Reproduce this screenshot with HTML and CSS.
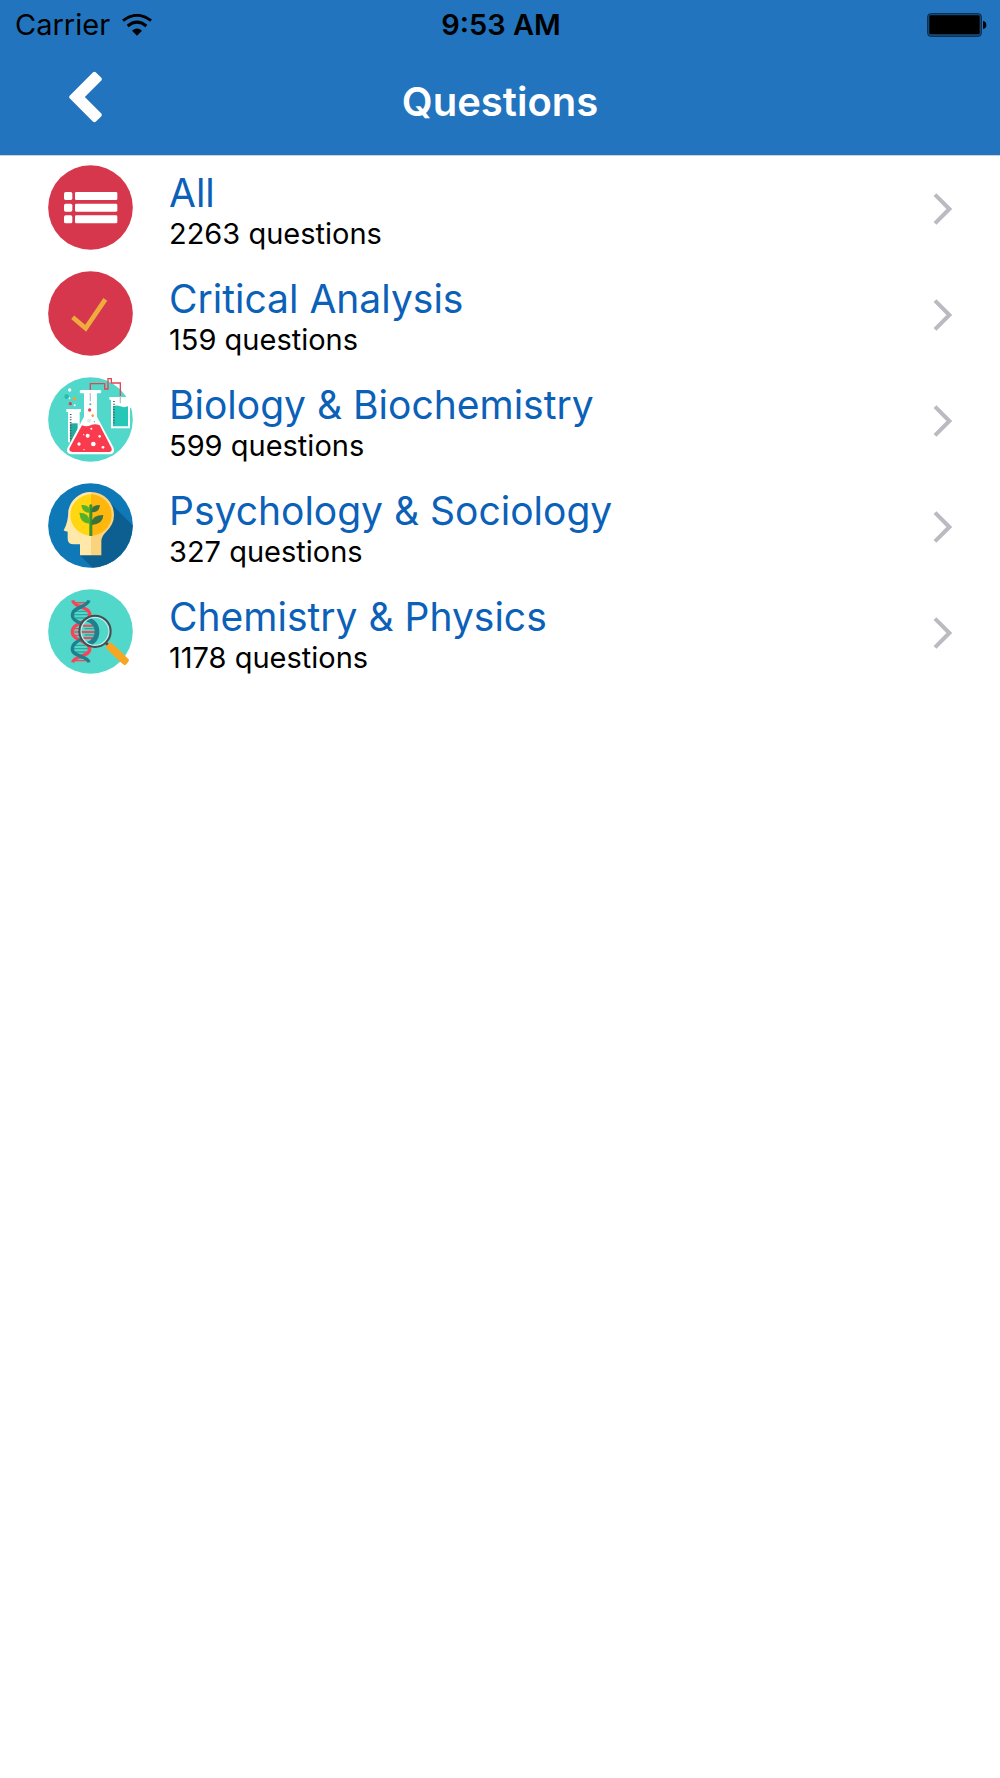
FILE: index.html
```html
<!DOCTYPE html>
<html lang="en">
<head>
    <meta charset="UTF-8">
    <title>Questions</title>
    <meta name="viewport" content="width=device-width, initial-scale=1.0">
    <link rel="stylesheet" href="styles.css">
</head>
<body>
    <!-- Header -->
    <header>
        <div class="status-bar">
            <div class="carrier">
                <span>Carrier</span>
                <svg class="wifi" viewBox="0 0 90 66" aria-hidden="true">
                    <path d="M3 20Q45-12 87 20" fill="none" stroke="#000" stroke-width="9"/>
                    <path d="M17 36Q45 13 73 36" fill="none" stroke="#000" stroke-width="9"/>
                    <path d="M30 50Q45 37 60 50L45 65Z"/>
                </svg>
            </div>
            <time>9:53 AM</time>
            <svg class="battery" viewBox="0 0 180 72" aria-hidden="true">
                <rect x="2" y="2" width="161" height="68" rx="9" fill="#174f80" stroke="#0b2740" stroke-width="3"/>
                <rect x="7" y="7" width="151" height="57" rx="4"/>
                <path d="M168 24Q178 26 178 36Q178 46 168 48Z"/>
            </svg>
        </div>
        <div class="nav-bar">
            <button type="button" class="back" aria-label="Back">
                <svg viewBox="0 0 100 154" aria-hidden="true">
                    <path d="M73 2Q77-1 81 2L98 19Q101 23 98 27L48 77L98 127Q101 131 98 135L81 152Q77 155 73 152L2 81Q-1 77 2 73Z" fill="#fff"/>
                </svg>
            </button>
            <h1>Questions</h1>
        </div>
    </header>

    <!-- Category list -->
    <main>
        <ul class="categories">
            <li>
                <a href="#">
                    <svg class="icon" viewBox="24 18 255 255" aria-hidden="true">
                        <circle cx="151.500" cy="145.500" r="127" fill="#d7374c"/>
                        <g fill="#fff">
                            <rect x="72" y="99" width="25" height="24" rx="5"/>
                            <rect x="105" y="99" width="127" height="24" rx="4"/>
                            <rect x="72" y="134" width="25" height="24" rx="5"/>
                            <rect x="105" y="134" width="127" height="24" rx="4"/>
                            <rect x="72" y="169" width="25" height="24" rx="5"/>
                            <rect x="105" y="169" width="127" height="24" rx="4"/>
                        </g>
                    </svg>
                    <span class="label">
                        <span class="name">All</span>
                        <span class="count">2263 questions</span>
                    </span>
                    <svg class="chevron" viewBox="0 0 57 96" aria-hidden="true"><path d="M6 5L49 48L6 91"/></svg>
                </a>
            </li>
            <li>
                <a href="#">
                    <svg class="icon" viewBox="24 25 255 255" aria-hidden="true">
                        <circle cx="151.500" cy="152.500" r="127" fill="#d7374c"/>
                        <path d="M98 164L137 197L196 110" fill="none" stroke="#efac3d" stroke-width="14"/>
                    </svg>
                    <span class="label">
                        <span class="name">Critical Analysis</span>
                        <span class="count">159 questions</span>
                    </span>
                    <svg class="chevron" viewBox="0 0 57 96" aria-hidden="true"><path d="M6 5L49 48L6 91"/></svg>
                </a>
            </li>
            <li>
                <a href="#">
                    <svg class="icon" viewBox="24 26 255 255" aria-hidden="true">
                        <circle cx="151.500" cy="153.500" r="127" fill="#52d8ca"/>
                        <!-- test tube -->
                        <path d="M79 122H123V131H119V222H84V131H79Z" fill="#fff"/>
                        <path d="M90 165H113V222H90Z" fill="#22ad9f"/>
                        <path d="M92 137V218" stroke="#4b5560" stroke-width="5" stroke-dasharray="3 5"/>
                        <!-- beaker -->
                        <path d="M208 86H273V118H270V180H213V94H208Z" fill="#fff"/>
                        <path d="M219 114Q230 109 241 114T264 114V174H219Z" fill="#25c8b6"/>
                        <path d="M222 98V171" stroke="#4b5560" stroke-width="5" stroke-dasharray="3 5"/>
                        <!-- pipe -->
                        <path d="M151 68V46H194V62H204V31H214V44H241V84" fill="none" stroke="#e54452" stroke-width="4"/>
                        <path d="M241 84V105" stroke="#b9c5ca" stroke-width="4"/>
                        <!-- flask -->
                        <path d="M123 65H180Q184 65 184 70T180 75H171V145L221 238Q226 257 208 258H95Q77 257 82 240L132 145V75H123Q119 75 119 70T123 65Z" fill="#fff"/>
                        <path d="M126 171Q139 177 152 171T179 171L214 238Q219 250 206 251H98Q85 250 89 239Z" fill="#fa3b4d"/>
                        <path d="M151 74V99" stroke="#b9c5ca" stroke-width="4"/>
                        <g fill="#fff">
                            <circle cx="143" cy="202" r="6"/>
                            <circle cx="160" cy="227" r="7"/>
                            <circle cx="117" cy="227" r="5"/>
                            <circle cx="179" cy="204" r="4"/>
                            <circle cx="189" cy="237" r="4"/>
                            <circle cx="154" cy="181" r="3"/>
                            <circle cx="131" cy="199" r="2"/>
                            <circle cx="132" cy="244" r="2"/>
                            <circle cx="89" cy="65" r="5"/>
                            <circle cx="88" cy="90" r="3"/>
                            <circle cx="104" cy="111" r="3"/>
                        </g>
                        <circle cx="80" cy="85" r="7" fill="#27bdac"/>
                        <circle cx="104" cy="91" r="5" fill="#f3a42b"/>
                        <circle cx="91" cy="106" r="5" fill="#d83f56"/>
                        <circle cx="149" cy="125" r="5" fill="#e54452"/>
                        <circle cx="151" cy="108" r="3" fill="#27bdac"/>
                        <circle cx="158" cy="142" r="4" fill="#f3a42b"/>
                        <circle cx="147" cy="157" r="6" fill="#e3e9eb"/>
                        <circle cx="163" cy="160" r="2" fill="#27bdac"/>
                    </svg>
                    <span class="label">
                        <span class="name">Biology &amp; Biochemistry</span>
                        <span class="count">599 questions</span>
                    </span>
                    <svg class="chevron" viewBox="0 0 57 96" aria-hidden="true"><path d="M6 5L49 48L6 91"/></svg>
                </a>
            </li>
            <li>
                <a href="#">
                    <svg class="icon" viewBox="24 21 255 255" aria-hidden="true">
                        <circle cx="151.500" cy="148.500" r="127" fill="#0f79b8"/>
                        <path d="M203 73L278 148A127 127 0 0 1 157 275L120 238V205L180 150Z" fill="#0d5f92"/>
                        <!-- head -->
                        <path d="M153 48A68 68 0 0 0 85 104Q85 138 71 163Q72 166 83 167V188Q83 205 101 205H120V238H153Z" fill="#ffe8a8"/>
                        <path d="M153 48A69 69 0 0 1 222 117Q222 145 198 168Q184 181 184 196V238H153Z" fill="#fbd37c"/>
                        <path d="M153 55A62 62 0 0 0 153 179Z" fill="#ffd60f"/>
                        <path d="M153 55A62 62 0 0 1 153 179Z" fill="#ffb70d"/>
                        <!-- plant -->
                        <path d="M148 180V87Q152 82 157 87V180Z" fill="#399130"/>
                        <path d="M150 110Q127 111 124 87Q146 86 150 102ZM150 143Q121 143 118 110Q145 110 150 134Z" fill="#55b12c"/>
                        <path d="M155 105Q154 87 180 87Q178 110 155 109ZM155 141Q156 117 190 117Q189 145 155 147Z" fill="#3a723e"/>
                    </svg>
                    <span class="label">
                        <span class="name">Psychology &amp; Sociology</span>
                        <span class="count">327 questions</span>
                    </span>
                    <svg class="chevron" viewBox="0 0 57 96" aria-hidden="true"><path d="M6 5L49 48L6 91"/></svg>
                </a>
            </li>
            <li>
                <a href="#">
                    <svg class="icon" viewBox="24 21 255 255" aria-hidden="true">
                        <circle cx="151.500" cy="148.500" r="127" fill="#52d8ca"/>
                        <!-- dna -->
                        <path d="M106 62H139M111 70H132M104 88H142M101 98H146M106 108H139M104 190H142M101 200H146M106 210H139" stroke="#2ba99f" stroke-width="4"/>
                        <path d="M104 62H141M112 70H134M103 140H135M103 150H135M103 160H135M110 228H134M104 236H141" stroke="#fa4357" stroke-width="4"/>
                        <g fill="none" stroke-width="10">
                            <path d="M98 55C104 80 149 72 149 98C149 124 97 120 97 149C97 178 149 174 149 202C149 224 103 220 98 241" stroke="#fa4357"/>
                            <path d="M147 55C141 76 97 76 97 98C97 116 113 118 127 126M127 170C112 178 97 184 97 202C97 224 142 220 147 241" stroke="#207e8d"/>
                        </g>
                        <!-- magnifier -->
                        <circle cx="165" cy="148" r="46" fill="#52d8ca"/>
                        <path d="M128 131H159M123 150H165M128 168H159" stroke="#fa4357" stroke-width="6"/>
                        <path d="M134 140H163M134 159H163" stroke="#2ba99f" stroke-width="4"/>
                        <path d="M139 111Q171 120 171 149T140 187" fill="none" stroke="#207e8d" stroke-width="14"/>
                        <circle cx="165" cy="148" r="42" fill="none" stroke="#b8eee9" stroke-width="4"/>
                        <circle cx="165" cy="148" r="47" fill="none" stroke="#494b50" stroke-width="6"/>
                        <path d="M198 183L207 192" stroke="#494b50" stroke-width="8"/>
                        <path d="M198 193L211 181Q214 181 267 233Q267 239 255 250Q251 251 198 198Z" fill="#f8a522"/>
                    </svg>
                    <span class="label">
                        <span class="name">Chemistry &amp; Physics</span>
                        <span class="count">1178 questions</span>
                    </span>
                    <svg class="chevron" viewBox="0 0 57 96" aria-hidden="true"><path d="M6 5L49 48L6 91"/></svg>
                </a>
            </li>
        </ul>
    </main>
</body>
</html>
```
FILE: styles.css
```css
* {
    box-sizing: border-box;
    margin: 0;
    padding: 0;
}
body {
    font-family: Inter, "Liberation Sans", sans-serif;
    background-color: #ffffff;
    color: #000000;
}
svg {
    display: block;
    flex-shrink: 0;
}
/* Header */
header {
    background-color: #2174bd;
    border-bottom: 1px solid #c9d3dc;
}
.status-bar {
    display: grid;
    grid-template-columns: 1fr auto 1fr;
    align-items: center;
    height: 50px;
    padding: 0 13px 0 15px;
    font-size: 29px;
    line-height: 50px;
}
.carrier {
    display: flex;
    align-items: center;
    gap: 12px;
}
.wifi {
    width: 30px;
    height: 22px;
}
.status-bar time {
    font-weight: 600;
}
.battery {
    width: 60px;
    height: 24px;
    justify-self: end;
}
.nav-bar {
    display: grid;
    grid-template-columns: 1fr auto 1fr;
    align-items: center;
    height: 105px;
    padding: 0 48px 2px;
}
.back {
    justify-self: start;
    padding: 10px 21px 20px;
    border: none;
    background: none;
    cursor: pointer;
}
.back svg {
    width: 33px;
    height: 52px;
}
.nav-bar h1 {
    font-size: 40px;
    line-height: 48px;
    font-weight: 600;
    color: #ffffff;
}
/* Category list */
.categories {
    list-style: none;
}
.categories a {
    display: flex;
    align-items: center;
    padding: 6px 48px 10px;
    color: #000000;
    text-decoration: none;
}
.icon {
    width: 85px;
    height: 85px;
    margin-right: 36px;
}
.label {
    flex: 1;
    padding-top: 8px;
}
.name,
.count {
    display: block;
}
.name {
    font-size: 39px;
    line-height: 46px;
    color: #0b60b8;
}
.count {
    font-size: 29px;
    line-height: 36px;
}
.chevron {
    width: 19px;
    height: 32px;
    margin-top: 4px;
}
.chevron path {
    fill: none;
    stroke: #bbbac1;
    stroke-width: 12;
}
```
